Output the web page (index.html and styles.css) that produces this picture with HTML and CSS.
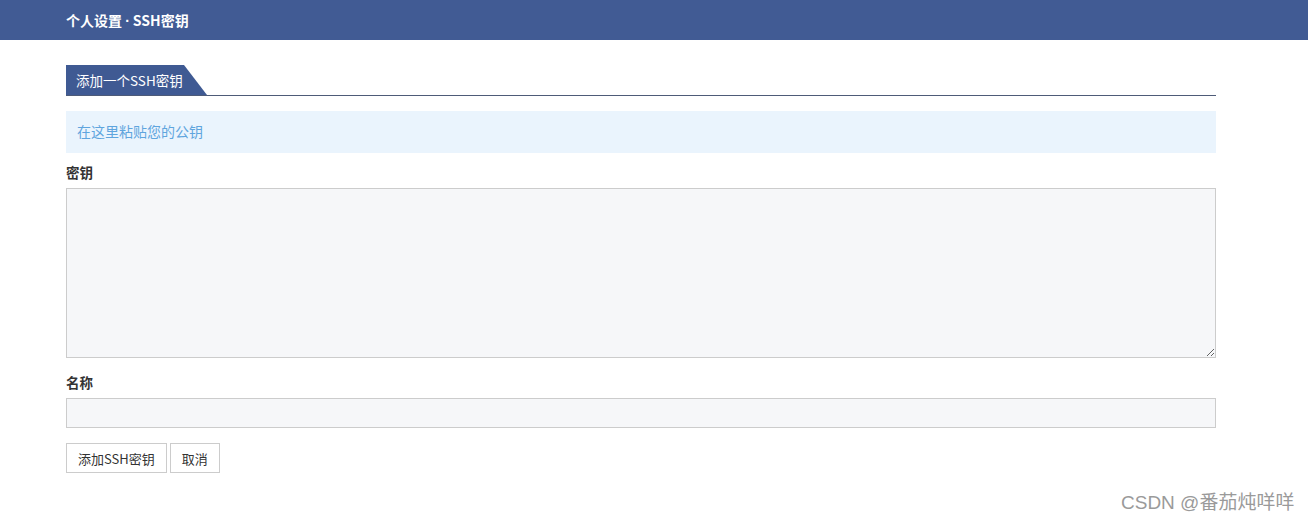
FILE: index.html
```html
<!DOCTYPE html>
<html lang="zh">
<head>
<meta charset="utf-8">
<title>SSH密钥</title>
<link rel="stylesheet" href="styles.css">
</head>
<body>
<header class="topbar">个人设置 <span class="dot">·</span>SSH密钥</header>
<main class="content">
  <div class="tabline"><span class="tab">添加一个SSH密钥</span></div>
  <div class="notice">在这里粘贴您的公钥</div>
  <label class="label">密钥</label>
  <textarea class="area"></textarea>
  <label class="label label-gap">名称</label>
  <input class="field" type="text">
  <div class="actions">
    <button class="btn">添加SSH密钥</button>
    <button class="btn">取消</button>
  </div>
</main>
<div class="watermark">CSDN @番茄炖咩咩</div>
</body>
</html>
```
FILE: styles.css
```css
* { box-sizing: border-box; }
body {
  margin: 0;
  font-family: "Noto Sans CJK SC", "Noto Sans", sans-serif;
  background: #fff;
  color: #333;
}
.topbar {
  height: 40px;
  background: #415b94;
  color: #fff;
  font-size: 14px;
  font-weight: bold;
  line-height: 40px;
  padding-left: 66px;
}
.dot {
  font-family: "Liberation Sans", sans-serif;
  margin-right: 3px;
}
.content {
  width: 1150px;
  margin-left: 66px;
  display: flex;
  flex-direction: column;
  padding-top: 25px;
}
.tabline {
  border-bottom: 1px solid #4e5b78;
  height: 31px;
}
.tab {
  display: inline-block;
  height: 30px;
  width: 141px;
  background: #3f5a93;
  color: #fff;
  font-size: 13.5px;
  line-height: 30px;
  padding-left: 10px;
  clip-path: polygon(0 0, 118px 0, 100% 100%, 0 100%);
}
.notice {
  margin-top: 15px;
  height: 42px;
  background: #eaf4fd;
  color: #5fa5de;
  font-size: 14px;
  line-height: 41px;
  padding-left: 11px;
}
.label {
  font-size: 13.5px;
  font-weight: bold;
  color: #333;
  line-height: 19px;
  margin-top: 10px;
  margin-bottom: 6px;
}
.label-gap {
  margin-top: 15px;
}
.area {
  height: 170px;
  width: 100%;
  border: 1px solid #ccc;
  background: #f6f7f9;
  border-radius: 0;
  margin: 0;
  display: block;
}
.field {
  height: 30px;
  width: 100%;
  border: 1px solid #ccc;
  background: #f6f7f9;
  margin: 0;
  display: block;
}
.actions {
  display: flex;
  gap: 3px;
  margin-top: 15px;
}
.btn {
  height: 30px;
  padding: 0 11px;
  border: 1px solid #ccc;
  background: #fff;
  color: #333;
  font-family: "Noto Sans CJK SC", "Noto Sans", sans-serif;
  font-size: 13px;
  border-radius: 0;
}
.watermark {
  position: absolute;
  left: 1121px;
  top: 489px;
  font-family: "Liberation Sans", "Noto Sans CJK SC", sans-serif;
  font-size: 19px;
  color: #9a9a9a;
  line-height: 28px;
}
```
